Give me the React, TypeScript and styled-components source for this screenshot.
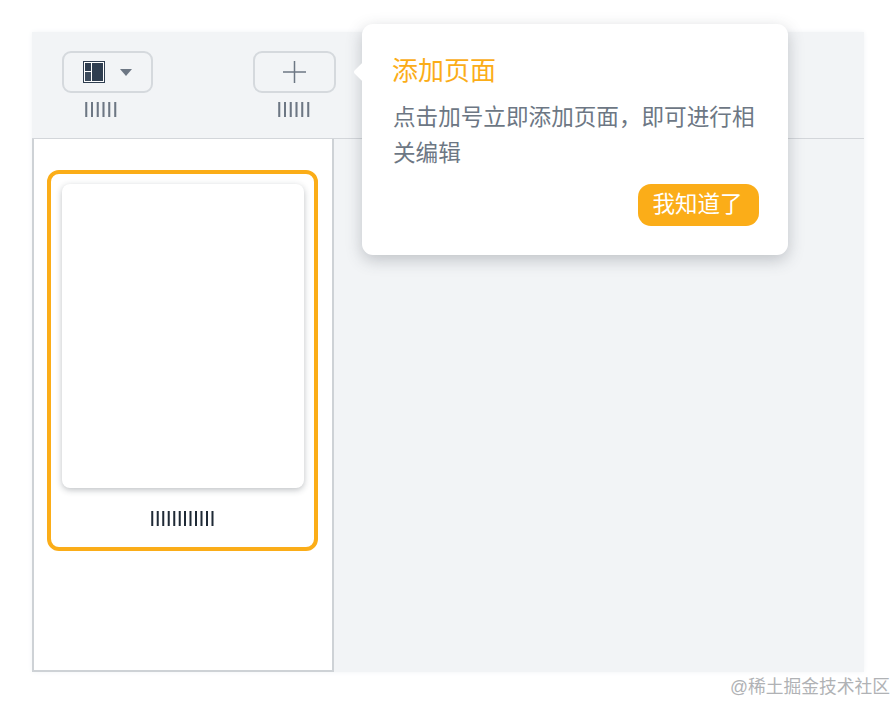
import * as React from 'react';
import styled, { createGlobalStyle } from 'styled-components';

const GlobalStyle = createGlobalStyle`
html, body {
  margin: 0;
  padding: 0;
  background: #ffffff;
}
body {
  font-family: "Liberation Sans", "Noto Sans CJK SC", sans-serif;
}
`;

const Page = styled.div`
position: relative;
width: 896px;
height: 704px;
padding: 32px;
box-sizing: border-box;
overflow: hidden;
`;

const Frame = styled.div`
width: 832px;
height: 640px;
background: #f2f4f6;
box-shadow: 0 0 5px #f2f4f6;
display: flex;
flex-direction: column;
`;

const Toolbar = styled.div`
height: 107px;
box-sizing: border-box;
border-bottom: 1px solid #d3d6da;
padding: 19px 0 0 30px;
display: flex;
gap: 100px;
`;

const ToolGroup = styled.div<{ $width: number }>`
width: ${(props) => props.$width}px;
display: flex;
flex-direction: column;
align-items: center;
gap: 7px;
`;

const ToolButton = styled.div`
width: 100%;
height: 42px;
box-sizing: border-box;
border: 2px solid #d5d9dd;
border-radius: 9px;
display: flex;
align-items: center;
justify-content: center;
gap: 15px;
`;

const Bars = styled.span<{ $color: string; $spacing: number; $shift?: number }>`
display: block;
font-family: "Liberation Sans", sans-serif;
font-size: 16px;
font-weight: 700;
line-height: 18px;
letter-spacing: ${(props) => props.$spacing}px;
color: ${(props) => props.$color};
white-space: nowrap;
margin-right: ${(props) => props.$shift ?? 0}px;
will-change: transform;
`;

const Body = styled.div`
flex: 1;
display: flex;
min-height: 0;
`;

const Sidebar = styled.div`
width: 302px;
box-sizing: border-box;
background: #ffffff;
border: 2px solid #ced2d6;
border-top: none;
padding: 31px 14px 0 13px;
`;

const PageCard = styled.div`
height: 381px;
box-sizing: border-box;
border: 4px solid #fbad18;
border-radius: 12px;
padding: 10px 10px 0 11px;
display: flex;
flex-direction: column;
align-items: center;
`;

const Thumb = styled.div`
width: 242px;
height: 304px;
background: #ffffff;
border-radius: 8px;
box-shadow: 0 2px 6px rgba(40, 50, 60, 0.3);
margin-bottom: 21px;
`;

const Popover = styled.div`
position: absolute;
left: 362px;
top: 24px;
width: 426px;
height: 231px;
box-sizing: border-box;
background: #ffffff;
border-radius: 11px;
box-shadow: 0 5px 16px rgba(60, 70, 80, 0.28);
padding: 29px 29px 0 31px;
display: flex;
flex-direction: column;
&::before {
  content: '';
  position: absolute;
  left: -6px;
  top: 41px;
  width: 14px;
  height: 14px;
  background: #ffffff;
  border-radius: 2px;
  transform: rotate(45deg);
}
`;

const PopTitle = styled.div`
font-size: 26px;
line-height: 36px;
color: #fbad18;
margin-left: -1px;
`;

const PopText = styled.div`
font-size: 22.6px;
line-height: 36px;
color: #6d7784;
margin-top: 11px;
`;

const PopFooter = styled.div`
display: flex;
justify-content: flex-end;
margin-top: 12px;
`;

const GotIt = styled.button`
width: 121px;
height: 42px;
padding: 0 2px 0 0;
border: none;
border-radius: 13px;
background: #fbad18;
color: #ffffff;
font-family: inherit;
font-size: 22.5px;
line-height: 42px;
`;

const Watermark = styled.div`
position: absolute;
right: 6px;
top: 675px;
font-size: 17.75px;
line-height: 24px;
color: #b0b2b5;
white-space: nowrap;
`;

const LayoutIcon = () => (
  <svg width="22" height="22" viewBox="0 0 22 22">
    <rect x="0.5" y="0.5" width="21" height="21" fill="#ffffff" stroke="#2f3e50" />
    <rect x="2" y="2" width="6" height="8" fill="#2f3e50" />
    <rect x="2" y="11" width="6" height="9" fill="#3c4b5c" />
    <rect x="9" y="2" width="11" height="18" fill="#2f3e50" />
  </svg>
);

const Caret = () => (
  <svg width="12" height="7" viewBox="0 0 12 7">
    <path d="M0 0 H12 L6 7 Z" fill="#6d7784" />
  </svg>
);

const PlusIcon = () => (
  <svg width="23" height="22" viewBox="0 0 23 22">
    <path d="M11.5 0 V22 M0 11 H23" stroke="#6d7784" strokeWidth="1.5" fill="none" />
  </svg>
);

export default function App() {
  return (
    <Page>
      <GlobalStyle />
      <Frame>
        <Toolbar>
          <ToolGroup $width={91}>
            <ToolButton>
              <LayoutIcon />
              <Caret />
            </ToolButton>
            <Bars $color="#6d7784" $spacing={1.3} $shift={13}>||||||</Bars>
          </ToolGroup>
          <ToolGroup $width={83}>
            <ToolButton>
              <PlusIcon />
            </ToolButton>
            <Bars $color="#6d7784" $spacing={1.3}>||||||</Bars>
          </ToolGroup>
        </Toolbar>
        <Body>
          <Sidebar>
            <PageCard>
              <Thumb />
              <Bars $color="#1f2a36" $spacing={1}>||||||||||||</Bars>
            </PageCard>
          </Sidebar>
        </Body>
      </Frame>
      <Popover>
        <PopTitle>添加页面</PopTitle>
        <PopText>点击加号立即添加页面，即可进行相关编辑</PopText>
        <PopFooter>
          <GotIt>我知道了</GotIt>
        </PopFooter>
      </Popover>
      <Watermark>@稀土掘金技术社区</Watermark>
    </Page>
  );
}
